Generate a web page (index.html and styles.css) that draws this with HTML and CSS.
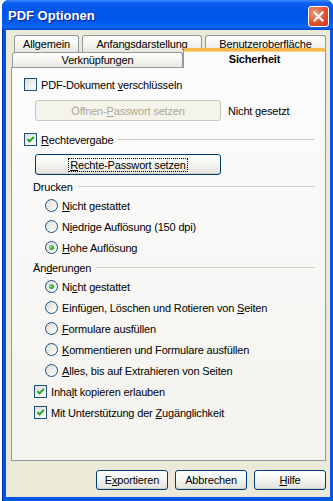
FILE: index.html
```html
<!DOCTYPE html>
<html lang="de">
<head>
  <meta charset="UTF-8">
  <title>PDF Optionen</title>
  <link rel="stylesheet" href="styles.css">
</head>
<body>
  <div class="window">
    <div class="titlebar">
      <span class="title">PDF Optionen</span>
      <span class="close">
        <svg width="11" height="11" viewBox="0 0 11 11"><path d="M1.5 1.5 L9.5 9.5 M9.5 1.5 L1.5 9.5" stroke="#fff" stroke-width="2.2" stroke-linecap="square"/></svg>
      </span>
    </div>

    <div class="client">
      <div class="tab-row back">
        <div class="tab t-allg">Allgemein</div>
        <div class="tab t-anf">Anfangsdarstellung</div>
        <div class="tab t-ben">Benutzeroberfläche</div>
      </div>
      <div class="tab-row front">
        <div class="tab t-verk">Verknüpfungen</div>
        <div class="tab active">Sicherheit</div>
      </div>

      <div class="panel">
        <div class="row check-top">
          <span class="cb"></span>
          <span>PDF-Dokument <u>v</u>erschlüsseln</span>
        </div>
        <div class="btn-line">
          <span class="btn wide disabled">Öffnen-<u>P</u>asswort setzen</span>
          <span class="note">Nicht gesetzt</span>
        </div>
        <div class="row check-top group">
          <span class="cb on"><svg width="11" height="11" viewBox="0 0 11 11"><path d="M2.5 5.2 L4.6 7.4 L8.8 2.8" fill="none" stroke="#21a121" stroke-width="2"/></svg></span>
          <span><u>R</u>echtevergabe</span>
          <span class="rule"></span>
        </div>
        <div class="btn-line second">
          <span class="btn wide"><span class="focus"><u>R</u>echte-Passwort setzen</span></span>
        </div>

        <div class="heading drucken">
          <span>Drucken</span>
          <span class="rule"></span>
        </div>
        <div class="row radio-row"><span class="rb"></span><span><u>N</u>icht gestattet</span></div>
        <div class="row radio-row"><span class="rb"></span><span>N<u>i</u>edrige Auflösung (150 dpi)</span></div>
        <div class="row radio-row"><span class="rb on"></span><span><u>H</u>ohe Auflösung</span></div>

        <div class="heading aend">
          <span>Än<u>d</u>erungen</span>
          <span class="rule"></span>
        </div>
        <div class="row radio-row"><span class="rb on"></span><span>Ni<u>c</u>ht gestattet</span></div>
        <div class="row radio-row"><span class="rb"></span><span>Einfügen, Löschen und Rotieren von <u>S</u>eiten</span></div>
        <div class="row radio-row"><span class="rb"></span><span><u>F</u>ormulare ausfüllen</span></div>
        <div class="row radio-row"><span class="rb"></span><span><u>K</u>ommentieren und Formulare ausfüllen</span></div>
        <div class="row radio-row"><span class="rb"></span><span><u>A</u>lles, bis auf Extrahieren von Seiten</span></div>

        <div class="row check-low">
          <span class="cb on"><svg width="11" height="11" viewBox="0 0 11 11"><path d="M2.5 5.2 L4.6 7.4 L8.8 2.8" fill="none" stroke="#21a121" stroke-width="2"/></svg></span>
          <span>Inha<u>l</u>t kopieren erlauben</span>
        </div>
        <div class="row check-low">
          <span class="cb on"><svg width="11" height="11" viewBox="0 0 11 11"><path d="M2.5 5.2 L4.6 7.4 L8.8 2.8" fill="none" stroke="#21a121" stroke-width="2"/></svg></span>
          <span>Mit Unterstützung der <u>Z</u>ugänglichkeit</span>
        </div>
      </div>

      <div class="buttons">
        <span class="btn">E<u>x</u>portieren</span>
        <span class="btn">Abbrechen</span>
        <span class="btn"><u>H</u>ilfe</span>
      </div>
    </div>
  </div>
</body>
</html>
```

FILE: styles.css
```css
body {
  margin: 0;
  background: #fff;
  font-family: 'Liberation Sans', Arial, sans-serif;
  font-size: 11px;
  letter-spacing: -0.17px;
  color: #000;
  overflow: hidden;
}
.window {
  margin-left: 2px;
  width: 331px;
  height: 501px;
  display: flex;
  flex-direction: column;
  background: #0055e5;
  border-radius: 7px 7px 0 0;
  box-shadow: inset 1px 0 #0031b5;
}
.titlebar {
  height: 30px;
  flex: none;
  display: flex;
  align-items: center;
  justify-content: space-between;
  padding: 0 4px 0 6px;
  border-radius: 7px 7px 0 0;
  background: linear-gradient(#3d8dff 0, #0a5ff0 3px, #0055e8 40%, #0059ee 75%, #0c66f5 90%, #0046d0 100%);
}
.title {
  font-weight: bold;
  font-size: 13px;
  letter-spacing: 0;
  color: #fff;
  text-shadow: 1px 1px #0a1e8c;
}
.close {
  width: 19px;
  height: 19px;
  margin-top: 2px;
  border: 1px solid #fff;
  border-radius: 3px;
  display: flex;
  align-items: center;
  justify-content: center;
  background: radial-gradient(circle at 30% 30%, #f09a80, #e0502f 55%, #c83a1c);
}
.client {
  flex: 1;
  margin: 0 3px 4px 4px;
  padding: 5px 4px 0 5px;
  background: #ece9d8;
}
.tab-row {
  display: flex;
}
.tab-row.back {
  padding-left: 3px;
  gap: 3px;
  height: 17px;
}
.tab-row.front {
  height: 17px;
  margin-top: -2px;
  align-items: flex-end;
  padding-left: 1px;
}
.tab {
  box-sizing: border-box;
  flex: none;
  height: 17px;
  border: 1px solid #919b9c;
  border-bottom: none;
  border-radius: 3px 3px 0 0;
  background: linear-gradient(#fff, #f3f3ef 60%, #e6e5de);
  text-align: center;
  line-height: 16px;
  white-space: nowrap;
}
.t-allg { width: 65px; }
.t-anf { width: 120px; }
.t-ben { width: 121px; }
.t-verk { width: 171px; height: 15px; line-height: 15px; }
.tab.active {
  width: 143px;
  height: 20px;
  margin-bottom: -1px;
  position: relative;
  font-weight: bold;
  line-height: 16px;
  background: #fcfcfe;
  border-top: 3px solid #f7b84a;
  box-shadow: inset 0 1px #ffd37a;
}
.panel {
  box-sizing: border-box;
  height: 394px;
  border: 1px solid #919b9c;
  background: linear-gradient(#fcfcfe, #f4f3ee);
  padding: 6px 10px 0 12px;
}
.row {
  display: flex;
  align-items: center;
  height: 21px;
  white-space: nowrap;
}
.cb {
  box-sizing: border-box;
  width: 13px;
  height: 13px;
  flex: none;
  margin-right: 4px;
  border: 1px solid #1c5180;
  background: linear-gradient(135deg, #dcdcd7, #fff);
  display: flex;
  align-items: center;
  justify-content: center;
}
.rule {
  flex: 1;
  height: 1px;
  margin-left: 5px;
  background: #d0d0bf;
}
.btn-line {
  display: flex;
  align-items: center;
  margin: 5px 0 0 11px;
}
.btn-line.second {
  margin-top: 4px;
}
.btn {
  box-sizing: border-box;
  height: 20px;
  width: 72px;
  display: flex;
  align-items: center;
  justify-content: center;
  border: 1px solid #003c74;
  border-radius: 3px;
  background: linear-gradient(#fff, #f4f4f0 50%, #e3e2da);
  box-shadow: inset 0 -1px #d6d0c5;
  white-space: nowrap;
}
.btn.wide {
  width: 186px;
  height: 21px;
}
.btn.disabled {
  border-color: #c9c7ba;
  background: #f5f4ea;
  box-shadow: none;
  color: #aca899;
}
.note {
  margin-left: 7px;
}
.focus {
  outline: 1px dotted #000;
  padding: 0 1px;
}
.check-top.group {
  margin-top: 8px;
}
.heading {
  display: flex;
  align-items: center;
  height: 17px;
  padding-left: 9px;
  white-space: nowrap;
}
.heading.drucken {
  margin-top: 3px;
}
.heading.aend {
  margin-top: 1px;
}
.radio-row {
  padding-left: 21px;
}
.rb {
  box-sizing: border-box;
  width: 13px;
  height: 13px;
  flex: none;
  margin-right: 4px;
  border: 1px solid #1c5180;
  border-radius: 50%;
  background: linear-gradient(135deg, #dcdcd7, #fff);
  display: flex;
  align-items: center;
  justify-content: center;
}
.rb.on::after {
  content: '';
  width: 5px;
  height: 5px;
  border-radius: 50%;
  background: radial-gradient(circle at 35% 35%, #7ee07e, #21a121 70%);
}
.check-low {
  padding-left: 10px;
}
.buttons {
  display: flex;
  justify-content: flex-end;
  gap: 7px;
  margin-top: 9px;
}
```
